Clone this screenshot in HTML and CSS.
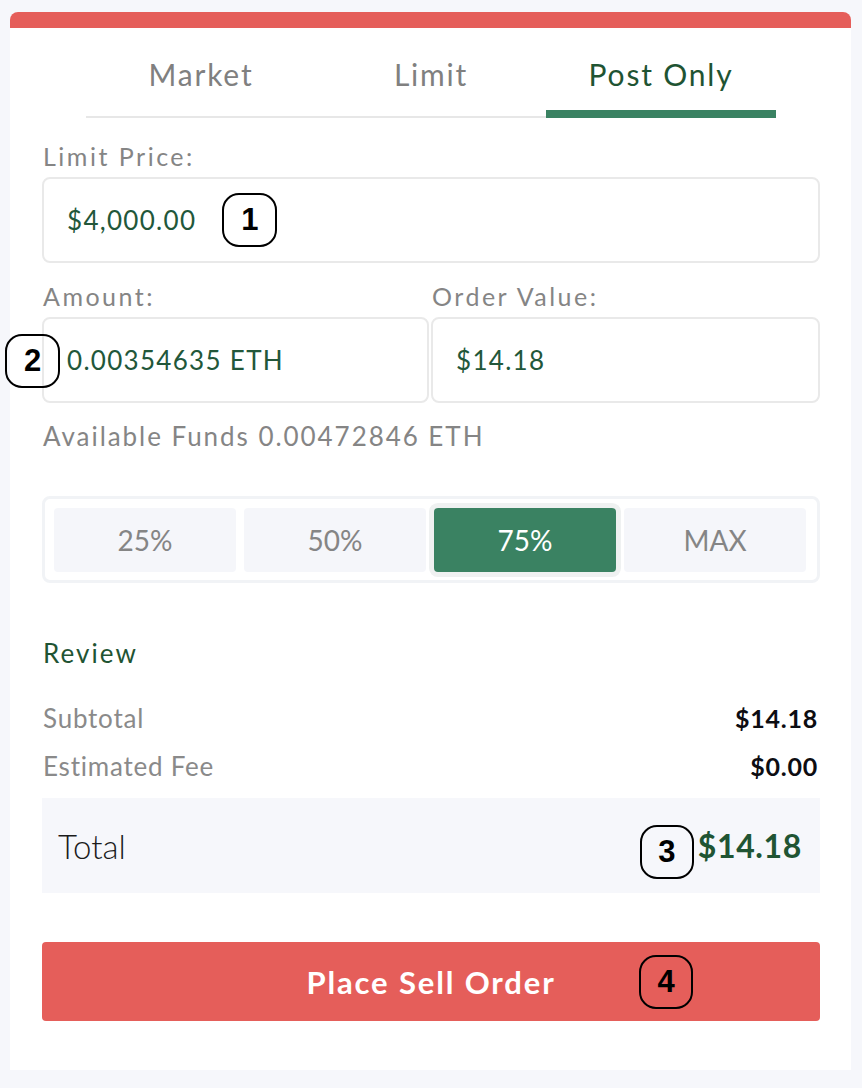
FILE: index.html
```html
<!DOCTYPE html>
<html lang="en">
<head>
<meta charset="utf-8">
<title>Place Sell Order</title>
<link rel="stylesheet" href="styles.css">
</head>
<body>
<main class="order-card">
  <div class="card-top"></div>
  <div class="card-body">
    <nav class="tabs">
      <div class="tab">Market</div>
      <div class="tab">Limit</div>
      <div class="tab tab-active">Post Only</div>
    </nav>

    <label class="field-label">Limit Price:</label>
    <div class="field">
      <span class="field-value">$4,000.00</span>
      <span class="step step-inline">1</span>
    </div>

    <div class="field-pair">
      <div class="field-col">
        <label class="field-label">Amount:</label>
        <div class="field">
          <span class="step step-left">2</span>
          <span class="field-value">0.00354635 ETH</span>
        </div>
      </div>
      <div class="field-col">
        <label class="field-label">Order Value:</label>
        <div class="field">
          <span class="field-value">$14.18</span>
        </div>
      </div>
    </div>

    <p class="available">Available Funds 0.00472846 ETH</p>

    <div class="pct-group">
      <div class="pct">25%</div>
      <div class="pct">50%</div>
      <div class="pct pct-active">75%</div>
      <div class="pct">MAX</div>
    </div>

    <h2 class="review-title">Review</h2>
    <div class="review-rows">
      <div class="row"><span class="row-label">Subtotal</span><span class="row-value">$14.18</span></div>
      <div class="row"><span class="row-label">Estimated Fee</span><span class="row-value">$0.00</span></div>
    </div>

    <div class="total">
      <span class="total-label">Total</span>
      <span class="step step-total">3</span>
      <span class="total-value">$14.18</span>
    </div>

    <div class="submit">
      Place Sell Order
      <span class="step step-submit">4</span>
    </div>
  </div>
</main>
</body>
</html>
```

FILE: styles.css
```css
body {
  margin: 0;
  background: #f6f7fb;
  font-family: Lato, "Liberation Sans", sans-serif;
}

.order-card {
  width: 841px;
  margin: 12px 11px 18px 10px;
  background: #ffffff;
  border-radius: 8px 8px 0 0;
}

.card-top {
  height: 16px;
  background: #e55e5a;
  border-radius: 8px 8px 0 0;
}

.card-body {
  padding: 0 31px 49px 32px;
}

/* order type tabs */
.tabs {
  display: flex;
  align-items: flex-end;
  margin: 0 44px 23px;
}

.tab {
  flex: 1;
  text-align: center;
  font-size: 30px;
  line-height: 36px;
  letter-spacing: 0.06em;
  color: #808080;
  padding: 28px 0 24px;
  border-bottom: 2px solid #e7e7e7;
}

.tab-active {
  color: #1f5433;
  padding-bottom: 18px;
  border-bottom: 8px solid #3a8262;
}

/* inputs */
.field-label {
  display: block;
  font-size: 25px;
  line-height: 30px;
  letter-spacing: 0.1em;
  color: #858585;
  margin: 0 0 6px 1px;
}

.field {
  position: relative;
  height: 86px;
  box-sizing: border-box;
  border: 2px solid #e9e9e9;
  border-radius: 8px;
  display: flex;
  align-items: center;
  padding-left: 23px;
}

.field-value {
  font-size: 26px;
  letter-spacing: 0.05em;
  color: #22573a;
}

.field-pair {
  display: grid;
  grid-template-columns: 387px 389px;
  column-gap: 2px;
  margin-top: 18px;
}

/* numbered step markers */
.step {
  width: 55px;
  height: 54px;
  box-sizing: border-box;
  border: 2px solid #000000;
  border-radius: 17px;
  display: inline-flex;
  align-items: center;
  justify-content: center;
  font-family: "Liberation Sans", Arial, sans-serif;
  font-weight: 700;
  font-size: 31px;
  letter-spacing: 0;
  color: #000000;
}

.step-inline {
  margin-left: 26px;
}

.step-left {
  position: absolute;
  left: -39px;
  top: 15px;
}

.step-total {
  margin-left: auto;
  margin-right: 4px;
  margin-top: 12px;
  width: 54px;
}

.step-submit {
  position: absolute;
  left: 597px;
  top: 13px;
  width: 54px;
}

.available {
  margin: 17px 0 0 1px;
  font-size: 26px;
  line-height: 32px;
  letter-spacing: 0.075em;
  color: #858585;
}

/* percentage presets */
.pct-group {
  margin-top: 44px;
  border: 3px solid #f1f3f6;
  border-radius: 8px;
  padding: 9px 11px 8px 9px;
  display: grid;
  grid-template-columns: repeat(4, 1fr);
  column-gap: 8px;
}

.pct {
  height: 64px;
  display: flex;
  align-items: center;
  justify-content: center;
  background: #f5f6fa;
  border-radius: 4px;
  font-size: 28px;
  color: #858585;
}

.pct-active {
  background: #3a8262;
  color: #ffffff;
  box-shadow: 0 0 0 5px #eff1f1;
}

/* review */
.review-title {
  margin: 54px 0 0 1px;
  font-size: 26px;
  line-height: 32px;
  font-weight: 400;
  letter-spacing: 0.08em;
  color: #1f5433;
}

.review-rows {
  margin-top: 25px;
}

.row {
  display: flex;
  justify-content: space-between;
  align-items: baseline;
  height: 48px;
  line-height: 48px;
  padding: 0 2px 0 1px;
}

.row-label {
  font-size: 26px;
  letter-spacing: 0.03em;
  color: #8a8a8a;
}

.row-value {
  font-size: 25px;
  font-weight: 700;
  letter-spacing: 0.03em;
  color: #0d0d12;
}

.total {
  margin-top: 8px;
  height: 95px;
  background: #f6f7fb;
  display: flex;
  align-items: center;
  padding: 0 18px 0 16px;
}

.total-label {
  font-size: 33px;
  font-weight: 300;
  color: #1b1b1b;
}

.total-value {
  font-size: 32px;
  font-weight: 700;
  letter-spacing: 0.02em;
  color: #205433;
}

.submit {
  position: relative;
  margin-top: 49px;
  height: 79px;
  background: #e55e5a;
  border-radius: 4px;
  display: flex;
  align-items: center;
  justify-content: center;
  color: #ffffff;
  font-size: 31px;
  font-weight: 700;
  letter-spacing: 0.06em;
}
```
